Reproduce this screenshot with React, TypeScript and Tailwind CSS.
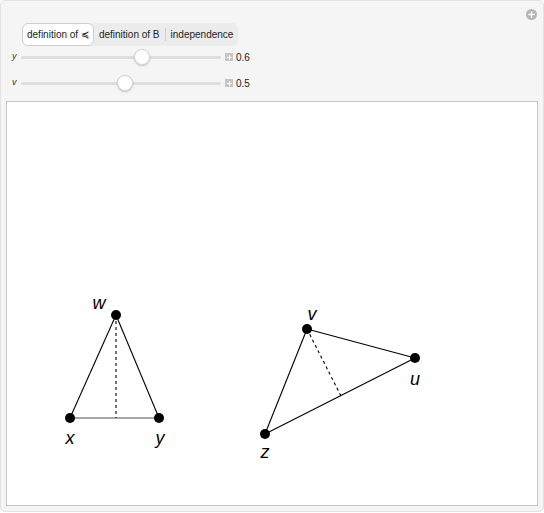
import { Plus } from 'lucide-react'

const sliders = [
  { label: 'y', value: 0.6, pos: 121 },
  { label: 'v', value: 0.5, pos: 104 },
]

function Dot({ x, y }: { x: number; y: number }) {
  return <circle cx={x} cy={y} r={5} fill="#000" />
}

function Label({ x, y, t }: { x: number; y: number; t: string }) {
  return (
    <text x={x} y={y} textAnchor="middle" fontSize={18} fontStyle="italic" fontFamily="'Liberation Sans', Arial, sans-serif" fill="#000">
      {t}
    </text>
  )
}

export default function App() {
  return (
    <div className="w-[544px] h-[513px] bg-white font-['Liberation_Sans',Arial,sans-serif]">
      <div className="relative w-[544px] h-[512px] bg-[#f5f5f5] border border-[#e3e3e3] rounded-[5px] flex flex-col">
        <div className="absolute right-[6px] top-[8px] w-[11px] h-[11px] rounded-full bg-[#b5b5b5] flex items-center justify-center">
          <Plus className="w-[9px] h-[9px] text-white" strokeWidth={4} />
        </div>

        <div className="pl-[21px] pt-[20px]">
          <div className="inline-flex items-center h-[23px] rounded-[6px] bg-[#ececec] text-[10px] text-[#222]">
            <div className="h-[23px] px-[4px] flex items-center bg-white border border-[#cfcfcf] rounded-[6px]">definition of ≼</div>
            <div className="px-[5px] flex items-center">definition of B</div>
            <div className="w-px h-[13px] bg-[#d0d0d0]" />
            <div className="px-[5px] flex items-center">independence</div>
          </div>
        </div>

        <div className="flex flex-col gap-[10px] pt-[3px] pl-[11px]">
          {sliders.map((s) => (
            <div key={s.label} className="flex items-center h-[16px]">
              <span className="w-[9px] text-[9px] italic text-[#333]">{s.label}</span>
              <div className="relative w-[200px] h-[16px] flex items-center">
                <div className="w-full h-[3px] rounded-full bg-[#dedede]" />
                <div
                  className="absolute top-0 w-[16px] h-[16px] rounded-full bg-white border border-[#d6d6d6] shadow-[0_1px_2px_rgba(0,0,0,0.2)]"
                  style={{ left: s.pos - 8 }}
                />
              </div>
              <div className="ml-[4px] w-[8px] h-[8px] bg-[#c4c4c4] flex items-center justify-center">
                <Plus className="w-[7px] h-[7px] text-white" strokeWidth={4} />
              </div>
              <span className="ml-[3px] text-[10px] text-[#222]">{s.value}</span>
            </div>
          ))}
        </div>

        <div className="mt-[10px] mx-[5px] h-[405px] bg-white border border-[#c6c6c6]">
          <svg width="100%" height="100%" viewBox="6 101 530 403">
            <g stroke="#000" strokeWidth={1.1} fill="none">
              <line x1={115} y1={314} x2={69} y2={417} />
              <line x1={115} y1={314} x2={158} y2={417} />
              <line x1={69} y1={417} x2={158} y2={417} stroke="#555" />
              <line x1={115} y1={314} x2={115} y2={417} strokeDasharray="3 3" />
              <line x1={306} y1={328} x2={414} y2={357} />
              <line x1={306} y1={328} x2={264} y2={433} />
              <line x1={264} y1={433} x2={414} y2={357} />
              <line x1={306} y1={328} x2={340} y2={395} strokeDasharray="3 3" />
            </g>
            <Dot x={115} y={314} />
            <Dot x={69} y={417} />
            <Dot x={158} y={417} />
            <Dot x={306} y={328} />
            <Dot x={414} y={357} />
            <Dot x={264} y={433} />
            <Label x={98} y={308} t="w" />
            <Label x={69} y={443} t="x" />
            <Label x={159} y={443} t="y" />
            <Label x={311} y={319} t="v" />
            <Label x={414} y={384} t="u" />
            <Label x={264} y={457} t="z" />
          </svg>
        </div>
      </div>
    </div>
  )
}
